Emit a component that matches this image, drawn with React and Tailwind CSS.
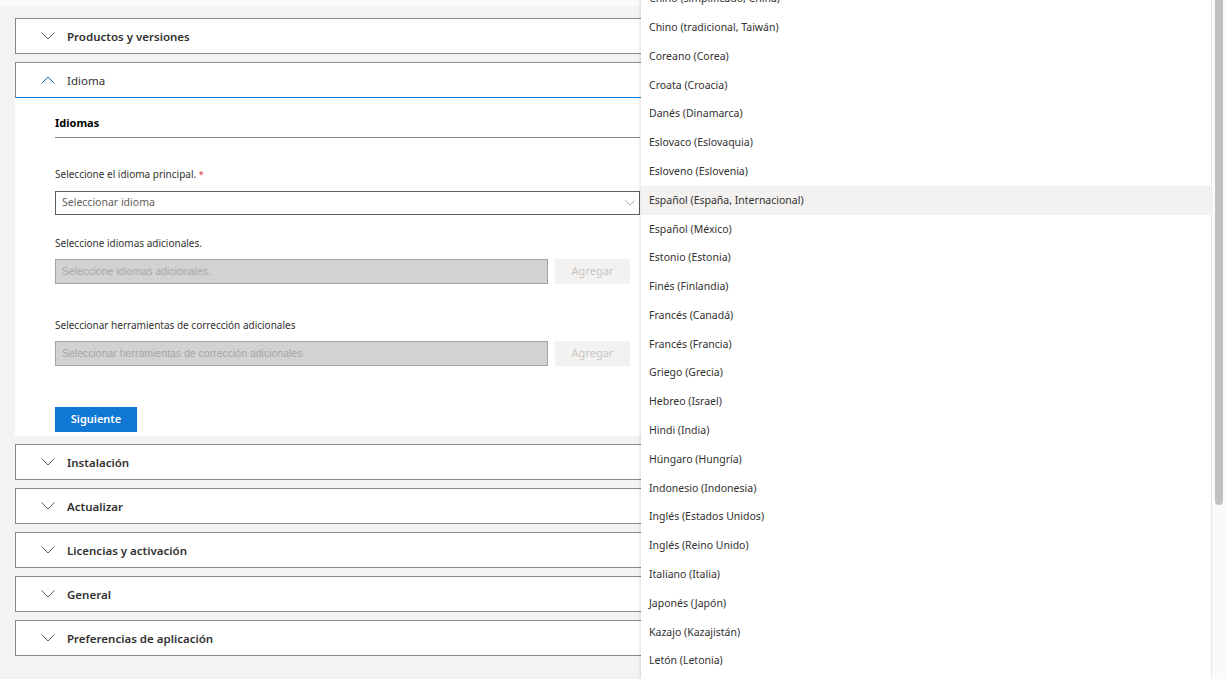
import React from 'react';

const languages = [
  'Chino (simplificado, China)',
  'Chino (tradicional, Taiwán)',
  'Coreano (Corea)',
  'Croata (Croacia)',
  'Danés (Dinamarca)',
  'Eslovaco (Eslovaquia)',
  'Esloveno (Eslovenia)',
  'Español (España, Internacional)',
  'Español (México)',
  'Estonio (Estonia)',
  'Finés (Finlandia)',
  'Francés (Canadá)',
  'Francés (Francia)',
  'Griego (Grecia)',
  'Hebreo (Israel)',
  'Hindi (India)',
  'Húngaro (Hungría)',
  'Indonesio (Indonesia)',
  'Inglés (Estados Unidos)',
  'Inglés (Reino Unido)',
  'Italiano (Italia)',
  'Japonés (Japón)',
  'Kazajo (Kazajistán)',
  'Letón (Letonia)',
];

const Chevron = ({ up = false, className = '' }) => (
  <svg width="14" height="8" viewBox="0 0 14 8" className={className} fill="none">
    <path
      d={up ? 'M0.5 7.5 L7 1 L13.5 7.5' : 'M0.5 0.5 L7 7 L13.5 0.5'}
      stroke="currentColor"
      strokeWidth="1"
    />
  </svg>
);

const CollapsedItem = ({ title }) => (
  <div className="h-[36px] border border-[#8a8886] bg-white flex items-center">
    <Chevron className="ml-[25px] text-[#605e5c]" />
    <span className="ml-[12px] pt-[2px] text-[11.5px] font-semibold text-[#323130]">{title}</span>
  </div>
);

const GreyInput = ({ placeholder }) => (
  <div className="flex gap-[7px]">
    <div className="w-[493px] h-[25px] bg-[#d2d2d2] border border-[#a3a3a3] flex items-center px-[6px]">
      <span className="text-[10.5px] text-[#a6a6a6] font-['Liberation_Sans',Arial,sans-serif]">
        {placeholder}
      </span>
    </div>
    <div className="w-[75px] h-[25px] bg-[#f3f2f1] flex items-center justify-center text-[11px] text-[#c8c6c4]">
      Agregar
    </div>
  </div>
);

export default function App() {
  return (
    <div className="relative w-[1226px] h-[679px] overflow-hidden bg-[#f3f3f3] font-['Noto_Sans','Open_Sans',sans-serif]">
      <div className="h-[6px] bg-[#fbfbfb]" />
      <div className="pl-[15px] pr-[16px] pt-[12px] flex flex-col gap-[8px]">
        <CollapsedItem title="Productos y versiones" />

        <div>
          <div className="h-[36px] border border-[#8a8886] border-b-[#0078d4] bg-white flex items-center">
            <Chevron up className="ml-[25px] text-[#0f6cbd]" />
            <span className="ml-[12px] pt-[2px] text-[11.5px] text-[#323130]">Idioma</span>
          </div>
          <div className="bg-white pl-[40px] pb-[4px]">
            <div className="w-[585px]">
              <div className="pt-[17px] pb-[6px] border-b border-[#8a8886] text-[11px] font-bold text-black leading-[16px]">
                Idiomas
              </div>
              <div className="mt-[29px] h-[14px] text-[10px] leading-[14px] text-[#323130]">
                Seleccione el idioma principal. <span className="text-[9px] leading-none text-[#d13438]">*</span>
              </div>
              <div className="mt-[10px] h-[24px] border border-[#605e5c] flex items-center justify-between pl-[6px] pr-[4px]">
                <span className="text-[10.5px] text-[#605e5c]">Seleccionar idioma</span>
                <Chevron className="w-[10px] h-[6px] text-[#8a8886]" />
              </div>
              <div className="mt-[21px] text-[10px] leading-[14px] text-[#323130]">
                Seleccione idiomas adicionales.
              </div>
              <div className="mt-[9px]">
                <GreyInput placeholder="Seleccione idiomas adicionales." />
              </div>
              <div className="mt-[34px] text-[10px] leading-[14px] text-[#323130]">
                Seleccionar herramientas de corrección adicionales
              </div>
              <div className="mt-[9px]">
                <GreyInput placeholder="Seleccionar herramientas de corrección adicionales" />
              </div>
              <div className="mt-[41px] w-[82px] h-[25px] bg-[#0f78d4] flex items-center justify-center text-[11px] font-semibold text-white">
                Siguiente
              </div>
            </div>
          </div>
        </div>

        <CollapsedItem title="Instalación" />
        <CollapsedItem title="Actualizar" />
        <CollapsedItem title="Licencias y activación" />
        <CollapsedItem title="General" />
        <CollapsedItem title="Preferencias de aplicación" />
      </div>

      {/* dropdown callout */}
      <div className="absolute left-[641px] top-0 w-[585px] h-[679px] bg-white shadow-[-1px_0_3px_rgba(0,0,0,0.12)] overflow-hidden">
        <div className="mr-[15px] mt-[-15.4px]">
          {languages.map((lang) => (
            <div
              key={lang}
              className={`h-[28.8px] flex items-center pl-[8px] text-[10.5px] text-[#323130] ${
                lang === 'Español (España, Internacional)' ? 'bg-[#f3f2f1]' : ''
              }`}
            >
              {lang}
            </div>
          ))}
        </div>
        <div className="absolute right-0 top-0 bottom-0 w-[15px] bg-[#fafafa] border-l border-[#e8e8e8]">
          <div className="ml-[3px] w-[8px] h-[505px] bg-[#c1c1c1] rounded-b-[4px]" />
        </div>
      </div>
    </div>
  );
}
